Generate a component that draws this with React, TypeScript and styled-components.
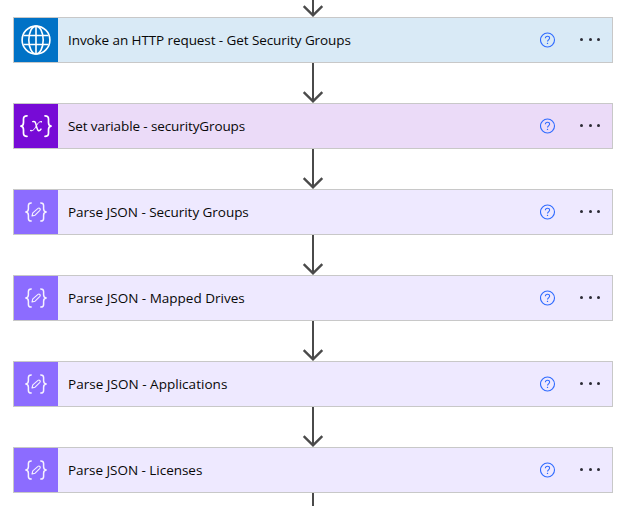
import React from "react";
import styled, { createGlobalStyle } from "styled-components";

const GlobalStyle = createGlobalStyle`
  body { margin: 0; background: #fff; overflow: hidden; }
`;

type Kind = "http" | "variable" | "json";

const palette: Record<Kind, { icon: string; body: string }> = {
  http: { icon: "#0072c6", body: "#d9eaf6" },
  variable: { icon: "#770bd6", body: "#ebdbf8" },
  json: { icon: "#8c6cff", body: "#eee9ff" },
};

const Flow = styled.main`
  width: 618px;
  height: 506px;
  overflow: hidden;
  display: flex;
  flex-direction: column;
  padding-left: 13px;
  box-sizing: border-box;
`;

const Card = styled.section<{ $kind: Kind }>`
  flex: none;
  display: flex;
  align-items: center;
  box-sizing: border-box;
  width: 600px;
  height: 46px;
  border: 1px solid #c8c8c8;
  background: ${(p) => palette[p.$kind].body};
`;

const IconTile = styled.div<{ $kind: Kind }>`
  flex: none;
  width: 44px;
  height: 44px;
  background: ${(p) => palette[p.$kind].icon};
  svg { display: block; }
`;

const Title = styled.span<{ $spacing: number }>`
  flex: 1;
  padding-left: 10px;
  font: 400 13.5px/20px "Open Sans", "Noto Sans", sans-serif;
  letter-spacing: ${(p) => p.$spacing}px;
  color: #080808;
  white-space: nowrap;
`;

const HelpButton = styled.button`
  width: 16px;
  height: 16px;
  padding: 0;
  border: 0;
  background: none;
  margin: 0 24px 1px 0;
  svg { display: block; }
`;

const MenuButton = styled.button`
  display: flex;
  justify-content: space-between;
  width: 20px;
  padding: 0;
  border: 0;
  background: none;
  margin: 0 12px 1px 0;
`;

const Dot = styled.i`
  width: 3px;
  height: 3px;
  border-radius: 1.5px;
  background: #2b2b35;
`;

const Connector = styled.div<{ $height: number }>`
  flex: none;
  height: ${(p) => p.$height}px;
  width: 600px;
  display: flex;
  justify-content: center;
  align-items: flex-end;
  overflow: hidden;
  svg { display: block; flex: none; }
`;

const Globe = () => (
  <svg width="44" height="44" viewBox="0 0 44 44" fill="none" stroke="#fff" strokeWidth="1.6">
    <circle cx="22" cy="22" r="13.9" />
    <ellipse cx="22" cy="22" rx="7.2" ry="13.9" />
    <path d="M22 8.2v27.6M9.6 17.5h24.8M9.6 26.5h24.8" />
  </svg>
);

const VariableIcon = () => (
  <svg width="44" height="44" viewBox="0 0 44 44" fill="none" stroke="#fff" strokeLinecap="round" strokeLinejoin="round">
    <path strokeWidth="1.7" d="M13 11.8c-2.5 0-3.5 1-3.5 3.2v3.5c0 2.2-.8 3.4-2.6 3.6 1.8.2 2.6 1.4 2.6 3.6v3.5c0 2.2 1 3.1 3.5 3.1M31 11.8c2.5 0 3.5 1 3.5 3.2v3.5c0 2.2.8 3.4 2.6 3.6-1.8.2-2.6 1.4-2.6 3.6v3.5c0 2.2-1 3.1-3.5 3.1" />
    <path strokeWidth="1.5" d="M18.8 17.6c2.2-.8 2.7.6 3.3 3.2.7 3.1 1.2 5.6 2.5 6 1 .2 1.8-.7 2.4-1.7" />
    <path strokeWidth="1" d="M27.5 17.7c-2.2-.7-3.6 1.5-5.1 4.1-1.7 2.9-3.1 5.7-5.7 4.9" />
    <path strokeWidth="1.5" d="M27.2 17.8h.1M16.9 26.5h.1" />
  </svg>
);

const JsonIcon = () => (
  <svg width="44" height="44" viewBox="0 0 44 44" fill="none" stroke="#f6f2ff" strokeLinecap="round" strokeLinejoin="round">
    <path strokeWidth="1.5" d="M17.2 13c-2.2 0-2.8.9-2.8 2.6v3.2c0 1.9-.8 3-2.6 3.2 1.8.2 2.6 1.3 2.6 3.2v3.2c0 1.7.6 2.6 2.8 2.6M26.8 13c2.2 0 2.8.9 2.8 2.6v3.2c0 1.9.8 3 2.6 3.2-1.8.2-2.6 1.3-2.6 3.2v3.2c0 1.7-.6 2.6-2.8 2.6" />
    <path strokeWidth="1.1" d="m18 26 .8-3.1 5.2-4.5c1.3-1 3 .6 1.9 1.9l-4.8 4.9L18 26Z" />
  </svg>
);

const Help = () => (
  <svg width="16" height="16" viewBox="0 0 16 16" fill="none" stroke="#2f6bff">
    <circle cx="7.5" cy="8" r="7" strokeWidth="1.1" />
    <path strokeWidth="1.1" d="M5.4 6.2c0-1.2.8-2 2.1-2s2.1.8 2.1 1.9c0 1.7-2.1 1.8-2.1 3.5" />
    <path strokeWidth="1.2" d="M7.5 10.8V12" />
  </svg>
);

const Arrow = ({ height }: { height: number }) => (
  <Connector $height={height}>
    <svg width="22" height="40" viewBox="0 0 22 40" fill="none" stroke="#4a4a4a">
      <path strokeWidth="2" d="M11 0v38" />
      <path strokeWidth="2.4" d="m1.7 29.1 9.3 9.2 9.3-9.2" />
    </svg>
  </Connector>
);

const Tail = styled.div`
  flex: none;
  align-self: flex-start;
  width: 2px;
  height: 13px;
  margin-left: 299px;
  background: #4a4a4a;
`;

const icons: Record<Kind, React.FC> = { http: Globe, variable: VariableIcon, json: JsonIcon };

const steps: { kind: Kind; title: string; spacing: number }[] = [
  { kind: "http", title: "Invoke an HTTP request - Get Security Groups", spacing: -0.085 },
  { kind: "variable", title: "Set variable - securityGroups", spacing: -0.11 },
  { kind: "json", title: "Parse JSON - Security Groups", spacing: -0.04 },
  { kind: "json", title: "Parse JSON - Mapped Drives", spacing: 0 },
  { kind: "json", title: "Parse JSON - Applications", spacing: 0.03 },
  { kind: "json", title: "Parse JSON - Licenses", spacing: -0.03 },
];

export default function App() {
  return (
    <>
      <GlobalStyle />
      <Flow>
        {steps.map(({ kind, title, spacing }, i) => {
          const Icon = icons[kind];
          return (
            <React.Fragment key={title}>
              <Arrow height={i === 0 ? 17 : 40} />
              <Card $kind={kind}>
                <IconTile $kind={kind}><Icon /></IconTile>
                <Title $spacing={spacing}>{title}</Title>
                <HelpButton aria-label="Help"><Help /></HelpButton>
                <MenuButton aria-label="More actions"><Dot /><Dot /><Dot /></MenuButton>
              </Card>
            </React.Fragment>
          );
        })}
        <Tail />
      </Flow>
    </>
  );
}
